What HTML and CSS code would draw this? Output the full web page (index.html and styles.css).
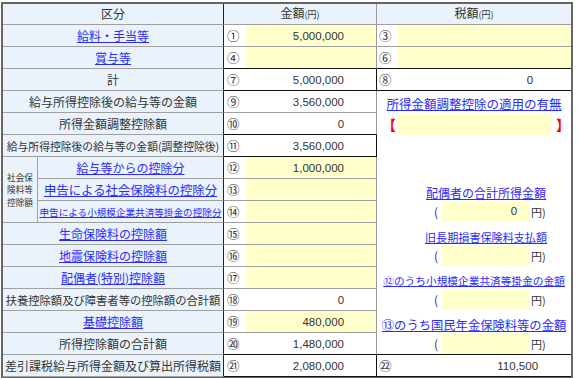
FILE: index.html
```html
<!DOCTYPE html>
<html lang="ja">
<head>
<meta charset="utf-8">
<link rel="stylesheet" href="styles.css">
</head>
<body>
<table class="sheet">
  <colgroup>
    <col class="c-grp"><col class="c-sub"><col class="c-num"><col class="c-amt"><col class="c-tnum"><col class="c-tamt">
  </colgroup>
  <tr>
    <th colspan="2" class="lbl h-kubun">区分</th>
    <th colspan="2" class="h-amt">金額<small>(円)</small></th>
    <th colspan="2" class="h-tax">税額<small>(円)</small></th>
  </tr>
  <tr>
    <td colspan="2" class="lbl"><a href="#">給料・手当等</a></td>
    <td class="num">①</td><td class="amt in">5,000,000</td>
    <td class="tnum">③</td><td class="tamt in"></td>
  </tr>
  <tr>
    <td colspan="2" class="lbl"><a href="#">賞与等</a></td>
    <td class="num bb">④</td><td class="amt in bb"></td>
    <td class="tnum bb">⑥</td><td class="tamt in bb"></td>
  </tr>
  <tr>
    <td colspan="2" class="lbl">計</td>
    <td class="num bb">⑦</td><td class="amt bb br">5,000,000</td>
    <td class="tnum bb">⑧</td><td class="tamt bb t-zero">0</td>
  </tr>
  <tr>
    <td colspan="2" class="lbl">給与所得控除後の給与等の金額</td>
    <td class="num">⑨</td><td class="amt">3,560,000</td>
    <td colspan="2" rowspan="12" class="panel bb">
      <div class="panel-in">
        <a href="#" class="adj-link">所得金額調整控除の適用の有無</a>
        <div class="adj-row"><span class="brk brk-l">【</span><span class="adj-box"></span><span class="brk brk-r">】</span></div>
        <div class="sec s1">
          <a href="#" class="sec-link">配偶者の合計所得金額</a>
          <div class="par-row"><span class="par">(</span><span class="pbox">0</span><span class="yen">円)</span></div>
        </div>
        <div class="sec s2">
          <a href="#" class="sec-link">旧長期損害保険料支払額</a>
          <div class="par-row"><span class="par">(</span><span class="pbox"></span><span class="yen">円)</span></div>
        </div>
        <div class="sec s3">
          <a href="#" class="sec-link">⑫のうち小規模企業共済等掛金の金額</a>
          <div class="par-row"><span class="par">(</span><span class="pbox"></span><span class="yen">円)</span></div>
        </div>
        <div class="sec s4">
          <a href="#" class="sec-link">⑬のうち国民年金保険料等の金額</a>
          <div class="par-row"><span class="par">(</span><span class="pbox"></span><span class="yen">円)</span></div>
        </div>
      </div>
    </td>
  </tr>
  <tr>
    <td colspan="2" class="lbl">所得金額調整控除額</td>
    <td class="num bb">⑩</td><td class="amt bb">0</td>
  </tr>
  <tr>
    <td colspan="2" class="lbl l-adj">給与所得控除後の給与等の金額(調整控除後)</td>
    <td class="num bb">⑪</td><td class="amt bb br">3,560,000</td>
  </tr>
  <tr>
    <td rowspan="3" class="grp"><span class="gl">社会保</span><span class="gl">険料等</span><span class="gl">控除額</span></td>
    <td class="lbl"><a href="#">給与等からの控除分</a></td>
    <td class="num">⑫</td><td class="amt in">1,000,000</td>
  </tr>
  <tr>
    <td class="lbl l-13"><a href="#">申告による社会保険料の控除分</a></td>
    <td class="num">⑬</td><td class="amt in"></td>
  </tr>
  <tr>
    <td class="lbl l-14"><a href="#">申告による小規模企業共済等掛金の控除分</a></td>
    <td class="num">⑭</td><td class="amt in"></td>
  </tr>
  <tr>
    <td colspan="2" class="lbl"><a href="#">生命保険料の控除額</a></td>
    <td class="num">⑮</td><td class="amt in"></td>
  </tr>
  <tr>
    <td colspan="2" class="lbl"><a href="#">地震保険料の控除額</a></td>
    <td class="num">⑯</td><td class="amt in"></td>
  </tr>
  <tr>
    <td colspan="2" class="lbl"><a href="#">配偶者(特別)控除額</a></td>
    <td class="num">⑰</td><td class="amt in"></td>
  </tr>
  <tr>
    <td colspan="2" class="lbl l-18">扶養控除額及び障害者等の控除額の合計額</td>
    <td class="num">⑱</td><td class="amt">0</td>
  </tr>
  <tr>
    <td colspan="2" class="lbl"><a href="#">基礎控除額</a></td>
    <td class="num">⑲</td><td class="amt in">480,000</td>
  </tr>
  <tr>
    <td colspan="2" class="lbl">所得控除額の合計額</td>
    <td class="num bb">⑳</td><td class="amt bb">1,480,000</td>
  </tr>
  <tr>
    <td colspan="2" class="lbl">差引課税給与所得金額及び算出所得税額</td>
    <td class="num bb">㉑</td><td class="amt bb br">2,080,000</td>
    <td class="tnum bb">㉒</td><td class="tamt bb t-last">110,500</td>
  </tr>
</table>
</body>
</html>
```

FILE: styles.css
```css
html, body {
  margin: 0;
  padding: 0;
  background: #ffffff;
}

body {
  font-family: "Noto Sans CJK JP", "Noto Sans", sans-serif;
  color: #333333;
}

.sheet {
  border-collapse: separate;
  border-spacing: 0;
  table-layout: fixed;
  width: 572px;
  margin: 2px 0 0 1px;
  border: 2px solid #666666;
}

.c-grp { width: 35px; }
.c-sub { width: 186px; }
.c-num { width: 22px; }
.c-amt { width: 131px; }
.c-tnum { width: 21px; }
.c-tamt { width: 173px; }

.sheet td,
.sheet th {
  padding: 0;
  height: 21px;
  border-bottom: 1px solid #a0a0a0;
  font-weight: normal;
  font-size: 12px;
  line-height: 14px;
  white-space: nowrap;
  overflow: hidden;
  vertical-align: middle;
}

.sheet th {
  height: 20px;
  background: #eaf3fc;
  text-align: center;
}

.h-kubun { font-size: 12px; }
.h-amt, .h-tax { font-size: 13px; }
.h-amt { border-right: 1px solid #999999; }
.sheet th small { font-size: 9px; }

.lbl {
  background: #eaf3fc;
  text-align: center;
  border-right: 1px solid #222222;
}

.sheet th.lbl { border-right: 1px solid #222222; }

.sheet .grp {
  background: #eaf3fc;
  border-right: 1px solid #a0a0a0;
  font-size: 8.6px;
  line-height: 12.5px;
  text-align: center;
}

.gl { display: block; }

.sheet .l-adj { font-size: 10.8px; }
.sheet .l-13 { font-size: 12.4px; }
.sheet .l-14 { font-size: 9.6px; }
.sheet .l-18 { font-size: 11.3px; }

.sheet a {
  color: #2b2bff;
  text-decoration: underline;
}

.sheet .num,
.sheet .tnum {
  background: #ffffff;
  font-size: 12.5px;
}

.sheet .num { padding-left: 3px; }
.sheet .tnum { padding-left: 2px; }

.sheet .amt,
.sheet .tamt {
  font-family: "Liberation Sans", Arial, sans-serif;
  font-size: 11.5px;
  text-align: right;
  background: #ffffff;
}

.sheet .amt {
  padding-right: 32px;
  border-right: 1px solid #999999;
}

.sheet .t-zero { padding-right: 38px; }
.sheet .t-last { padding-right: 33px; }

.sheet .in { background: #ffffcc; }

.sheet .bb { border-bottom: 1px solid #111111; }
.sheet .br { border-right: 1px solid #111111; }

.sheet .panel {
  background: #ffffff;
  vertical-align: top;
}

.panel-in {
  height: 263px;
  display: flex;
  flex-direction: column;
}

.adj-link {
  margin-top: 5px;
  display: block;
  text-align: center;
  font-size: 12.5px;
  line-height: 16px;
}

.adj-row {
  margin-top: 2px;
  height: 21px;
  display: flex;
  align-items: center;
  padding-left: 5px;
}

.brk {
  color: #ff0000;
  font-size: 14px;
  font-weight: bold;
  line-height: 21px;
  width: 14px;
}

.adj-box {
  margin-left: 2px;
  width: 154px;
  height: 21px;
  background: #ffffcc;
}

.brk-r { margin-left: 4px; }

.s1 { margin-top: 50px; }

.sec {
  margin-bottom: 7px;
  display: flex;
  flex-direction: column;
}

.sec-link {
  display: block;
  text-align: center;
  line-height: 16px;
}

.s1 .sec-link { font-size: 12px; padding-left: 24px; }
.s2 .sec-link { font-size: 11.1px; padding-left: 24px; }
.s3 .sec-link { font-size: 10.7px; }
.s4 .sec-link { font-size: 12.3px; }

.par-row {
  height: 21px;
  display: flex;
  align-items: center;
  padding-left: 57px;
}

.par {
  width: 8px;
  font-size: 12px;
}

.pbox {
  width: 88px;
  height: 21px;
  background: #ffffcc;
  font-family: "Liberation Sans", Arial, sans-serif;
  font-size: 11.5px;
  line-height: 21px;
  text-align: right;
  padding-right: 13px;
  box-sizing: border-box;
}

.yen {
  margin-left: 1px;
  font-size: 11px;
}
```
